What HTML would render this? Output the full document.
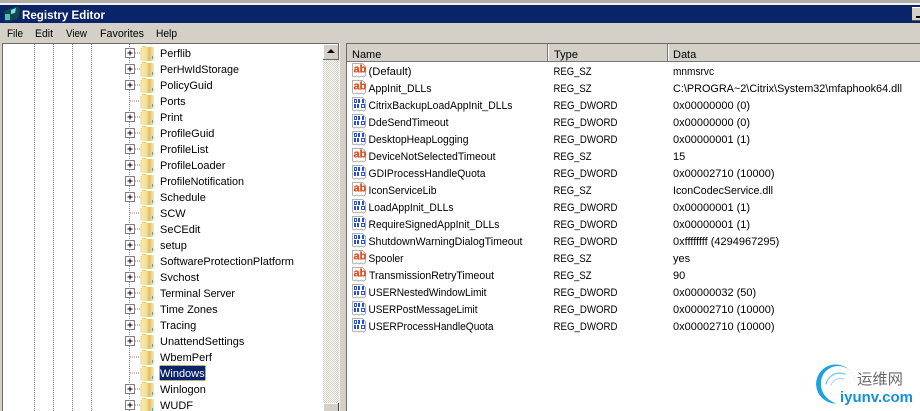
<!DOCTYPE html>
<html><head><meta charset="utf-8"><style>
html,body{margin:0;padding:0;background:#d4d0c8}
svg{display:block}
text{font-family:"Liberation Sans",sans-serif;font-size:11px;fill:#000}
</style></head><body>
<svg width="920" height="411" viewBox="0 0 920 411" xmlns="http://www.w3.org/2000/svg">
<defs>
<linearGradient id="fg" x1="0" x2="1" y1="0" y2="0">
<stop offset="0" stop-color="#f9eeb2"/><stop offset=".45" stop-color="#f2dc90"/><stop offset=".62" stop-color="#dfbd66"/><stop offset=".8" stop-color="#ecd484"/><stop offset="1" stop-color="#f8eab0"/>
</linearGradient>
<g id="f">
<path d="M0 2l1-1h4l1 1h6l1 1v12l-1 1H1l-1-1z" fill="url(#fg)"/>
<path d="M0 3v12M1 1.500h4" stroke="#e0c677" fill="none" stroke-width=".8"/>
<path d="M11 11h1v3h-1z" fill="#4aa3df"/>
</g>
<g id="b">
<rect x=".5" y=".5" width="9" height="9" fill="#fff" stroke="#808080"/>
<path d="M2 4.500h5M4.500 2v5" stroke="#000" transform="translate(.5 .5)"/>
<path d="M10 5h5" stroke="#808080" stroke-dasharray="1 1"/>
</g>
<path id="p" d="M1.500 1.500H11.500l3 3V13.500l-2 1.500-2-1-2.500 1-2.500-1-2.500 1-1.500-1z" fill="#fff" stroke="#b0b0b0"/>
<g id="s">
<use href="#p"/>
<text x="2.500" y="10.500" style="font-size:11px;font-weight:bold;fill:#e04a1c;stroke:#e04a1c;stroke-width:.2">ab</text>
</g>
<g id="d">
<use href="#p"/>
<g fill="#2a4fd0">
<path d="M3 3h3v4H3zM4 4v2h1V4z" fill-rule="evenodd"/>
<rect x="7" y="3" width="2" height="4"/><rect x="11" y="3" width="2" height="4"/>
<rect x="3" y="8" width="2" height="4"/><rect x="6" y="8" width="2" height="4"/>
<path d="M10 8h4v4h-4zM11 9v2h2V9z" fill-rule="evenodd"/>
</g>
</g>
<pattern id="chk" width="2" height="2" patternUnits="userSpaceOnUse"><rect width="2" height="2" fill="#fff"/><rect width="1" height="1" fill="#d4d0c8"/><rect x="1" y="1" width="1" height="1" fill="#d4d0c8"/></pattern>
</defs>

<rect width="920" height="411" fill="#d4d0c8"/>
<rect width="920" height="3" fill="#b0aea8"/>
<rect y="3" width="920" height="2" fill="#f4f3ef"/>
<rect y="5" width="920" height="18" fill="#0a246a"/>
<rect x="912" y="7" width="8" height="14" fill="#d4d0c8"/>
<rect x="912" y="7" width="8" height="1" fill="#fff"/>
<rect x="916" y="16" width="4" height="2" fill="#000"/>
<rect y="20" x="912" width="8" height="1" fill="#555"/>

<g>
<path d="M4 11l8-3 6-2 2 4-2 9-13 3z" fill="#14484c"/>
<path d="M5 14h5v6H5z" fill="#4cc0c0"/>
<path d="M11 10l5-2-1 5-4 1z" fill="#79e6e6"/>
</g>
<text x="22" y="19" textLength="83" lengthAdjust="spacingAndGlyphs" style="font-size:11.500px;font-weight:bold;fill:#fff">Registry Editor</text>

<text x="7" y="37" textLength="16" lengthAdjust="spacingAndGlyphs">File</text>
<text x="35" y="37" textLength="18" lengthAdjust="spacingAndGlyphs">Edit</text>
<text x="66" y="37" textLength="21" lengthAdjust="spacingAndGlyphs">View</text>
<text x="100" y="37" textLength="44" lengthAdjust="spacingAndGlyphs">Favorites</text>
<text x="156" y="37" textLength="21" lengthAdjust="spacingAndGlyphs">Help</text>

<rect x="2" y="43" width="338" height="1" fill="#6e6c66"/>
<rect x="2" y="43" width="1" height="368" fill="#6e6c66"/>
<rect x="3" y="44" width="321" height="367" fill="#fff"/>

<rect x="323" y="44" width="16" height="367" fill="url(#chk)"/>
<rect x="323" y="44" width="16" height="16" fill="#d4d0c8"/>
<path d="M323.500 59.500V44.500H338" fill="none" stroke="#fff"/>
<path d="M323 59.500h15.500V44" fill="none" stroke="#666"/>
<path d="M331 49l4 4h-8z" fill="#000"/>
<rect x="323" y="403" width="16" height="8" fill="#d4d0c8"/>
<path d="M323.500 411V403.500H338" fill="none" stroke="#fff"/>
<rect x="338" y="403" width="1" height="8" fill="#444"/>
<rect x="339" y="43" width="1" height="368" fill="#f2f1ed"/>

<g stroke="#808080" stroke-dasharray="1 1" fill="none">
<path d="M34.500 44V411M53.500 44V411M72.500 44V411M91.500 44V411"/>
<path d="M129.500 44V411"/>
<path d="M130 101h10M130 213h10M130 357h10M130 373h10"/>
</g>

<use href="#b" x="125" y="48"/><use href="#f" x="141" y="45"/>
<use href="#b" x="125" y="64"/><use href="#f" x="141" y="61"/>
<use href="#b" x="125" y="80"/><use href="#f" x="141" y="77"/>
<use href="#f" x="141" y="93"/>
<use href="#b" x="125" y="112"/><use href="#f" x="141" y="109"/>
<use href="#b" x="125" y="128"/><use href="#f" x="141" y="125"/>
<use href="#b" x="125" y="144"/><use href="#f" x="141" y="141"/>
<use href="#b" x="125" y="160"/><use href="#f" x="141" y="157"/>
<use href="#b" x="125" y="176"/><use href="#f" x="141" y="173"/>
<use href="#b" x="125" y="192"/><use href="#f" x="141" y="189"/>
<use href="#f" x="141" y="205"/>
<use href="#b" x="125" y="224"/><use href="#f" x="141" y="221"/>
<use href="#b" x="125" y="240"/><use href="#f" x="141" y="237"/>
<use href="#b" x="125" y="256"/><use href="#f" x="141" y="253"/>
<use href="#b" x="125" y="272"/><use href="#f" x="141" y="269"/>
<use href="#b" x="125" y="288"/><use href="#f" x="141" y="285"/>
<use href="#b" x="125" y="304"/><use href="#f" x="141" y="301"/>
<use href="#b" x="125" y="320"/><use href="#f" x="141" y="317"/>
<use href="#b" x="125" y="336"/><use href="#f" x="141" y="333"/>
<use href="#f" x="141" y="349"/>
<use href="#f" x="141" y="365"/>
<use href="#b" x="125" y="384"/><use href="#f" x="141" y="381"/>
<use href="#b" x="125" y="400"/><use href="#f" x="141" y="397"/>

<rect x="159.500" y="365.500" width="46" height="15" fill="#0a246a" stroke="#e8c840" stroke-dasharray="1 1"/>

<g>
<text x="160" y="57" textLength="31" lengthAdjust="spacingAndGlyphs">Perflib</text>
<text x="160" y="73" textLength="79" lengthAdjust="spacingAndGlyphs">PerHwIdStorage</text>
<text x="160" y="89">PolicyGuid</text>
<text x="160" y="105">Ports</text>
<text x="160" y="121">Print</text>
<text x="160" y="137">ProfileGuid</text>
<text x="160" y="153">ProfileList</text>
<text x="160" y="169">ProfileLoader</text>
<text x="160" y="185" textLength="84" lengthAdjust="spacingAndGlyphs">ProfileNotification</text>
<text x="160" y="201">Schedule</text>
<text x="160" y="217">SCW</text>
<text x="160" y="233">SeCEdit</text>
<text x="160" y="249">setup</text>
<text x="160" y="265">SoftwareProtectionPlatform</text>
<text x="160" y="281">Svchost</text>
<text x="160" y="297" textLength="75" lengthAdjust="spacingAndGlyphs">Terminal Server</text>
<text x="160" y="313">Time Zones</text>
<text x="160" y="329">Tracing</text>
<text x="160" y="345">UnattendSettings</text>
<text x="160" y="361">WbemPerf</text>
<text x="160" y="377" style="fill:#fff">Windows</text>
<text x="160" y="393">Winlogon</text>
<text x="160" y="409">WUDF</text>
</g>

<rect x="346" y="43" width="574" height="368" fill="#fff"/>
<rect x="346" y="43" width="574" height="1" fill="#6e6c66"/>
<rect x="346" y="43" width="1" height="368" fill="#6e6c66"/>
<rect x="347" y="44" width="573" height="17" fill="#d4d0c8"/>
<rect x="347" y="61" width="573" height="1" fill="#777"/>
<rect x="547" y="44" width="1" height="17" fill="#777"/>
<rect x="548" y="44" width="1" height="17" fill="#fff"/>
<rect x="667" y="44" width="1" height="17" fill="#777"/>
<rect x="668" y="44" width="1" height="17" fill="#fff"/>
<text x="352" y="58">Name</text>
<text x="554" y="58" textLength="24" lengthAdjust="spacingAndGlyphs">Type</text>
<text x="673" y="58">Data</text>

<use href="#s" x="351" y="62"/><text x="368.500" y="75" textLength="43" lengthAdjust="spacingAndGlyphs">(Default)</text><text x="553.500" y="75" textLength="38" lengthAdjust="spacingAndGlyphs">REG_SZ</text><text x="673" y="75" textLength="41" lengthAdjust="spacingAndGlyphs">mnmsrvc</text>
<use href="#s" x="351" y="79"/><text x="368.500" y="92" textLength="63" lengthAdjust="spacingAndGlyphs">AppInit_DLLs</text><text x="553.500" y="92" textLength="38" lengthAdjust="spacingAndGlyphs">REG_SZ</text><text x="673" y="92" textLength="229" lengthAdjust="spacingAndGlyphs">C:\PROGRA~2\Citrix\System32\mfaphook64.dll</text>
<use href="#d" x="351" y="96"/><text x="368.500" y="109" textLength="144" lengthAdjust="spacingAndGlyphs">CitrixBackupLoadAppInit_DLLs</text><text x="553.500" y="109" textLength="64" lengthAdjust="spacingAndGlyphs">REG_DWORD</text><text x="673" y="109">0x00000000 (0)</text>
<use href="#d" x="351" y="113"/><text x="368.500" y="126" textLength="80" lengthAdjust="spacingAndGlyphs">DdeSendTimeout</text><text x="553.500" y="126" textLength="64" lengthAdjust="spacingAndGlyphs">REG_DWORD</text><text x="673" y="126">0x00000000 (0)</text>
<use href="#d" x="351" y="130"/><text x="368.500" y="143" textLength="100" lengthAdjust="spacingAndGlyphs">DesktopHeapLogging</text><text x="553.500" y="143" textLength="64" lengthAdjust="spacingAndGlyphs">REG_DWORD</text><text x="673" y="143">0x00000001 (1)</text>
<use href="#s" x="351" y="147"/><text x="368.500" y="160" textLength="127" lengthAdjust="spacingAndGlyphs">DeviceNotSelectedTimeout</text><text x="553.500" y="160" textLength="38" lengthAdjust="spacingAndGlyphs">REG_SZ</text><text x="673" y="160">15</text>
<use href="#d" x="351" y="164"/><text x="368.500" y="177" textLength="117" lengthAdjust="spacingAndGlyphs">GDIProcessHandleQuota</text><text x="553.500" y="177" textLength="64" lengthAdjust="spacingAndGlyphs">REG_DWORD</text><text x="673" y="177">0x00002710 (10000)</text>
<use href="#s" x="351" y="181"/><text x="368.500" y="194" textLength="68" lengthAdjust="spacingAndGlyphs">IconServiceLib</text><text x="553.500" y="194" textLength="38" lengthAdjust="spacingAndGlyphs">REG_SZ</text><text x="673" y="194" textLength="100" lengthAdjust="spacingAndGlyphs">IconCodecService.dll</text>
<use href="#d" x="351" y="198"/><text x="368.500" y="211" textLength="85" lengthAdjust="spacingAndGlyphs">LoadAppInit_DLLs</text><text x="553.500" y="211" textLength="64" lengthAdjust="spacingAndGlyphs">REG_DWORD</text><text x="673" y="211">0x00000001 (1)</text>
<use href="#d" x="351" y="215"/><text x="368.500" y="228" textLength="131" lengthAdjust="spacingAndGlyphs">RequireSignedAppInit_DLLs</text><text x="553.500" y="228" textLength="64" lengthAdjust="spacingAndGlyphs">REG_DWORD</text><text x="673" y="228">0x00000001 (1)</text>
<use href="#d" x="351" y="232"/><text x="368.500" y="245" textLength="154" lengthAdjust="spacingAndGlyphs">ShutdownWarningDialogTimeout</text><text x="553.500" y="245" textLength="64" lengthAdjust="spacingAndGlyphs">REG_DWORD</text><text x="673" y="245">0xffffffff (4294967295)</text>
<use href="#s" x="351" y="249"/><text x="368.500" y="262" textLength="35" lengthAdjust="spacingAndGlyphs">Spooler</text><text x="553.500" y="262" textLength="38" lengthAdjust="spacingAndGlyphs">REG_SZ</text><text x="673" y="262">yes</text>
<use href="#s" x="351" y="266"/><text x="369" y="279" textLength="125" lengthAdjust="spacingAndGlyphs">TransmissionRetryTimeout</text><text x="553.500" y="279" textLength="38" lengthAdjust="spacingAndGlyphs">REG_SZ</text><text x="673" y="279">90</text>
<use href="#d" x="351" y="283"/><text x="368.500" y="296" textLength="118" lengthAdjust="spacingAndGlyphs">USERNestedWindowLimit</text><text x="553.500" y="296" textLength="64" lengthAdjust="spacingAndGlyphs">REG_DWORD</text><text x="673" y="296">0x00000032 (50)</text>
<use href="#d" x="351" y="300"/><text x="368.500" y="313" textLength="109" lengthAdjust="spacingAndGlyphs">USERPostMessageLimit</text><text x="553.500" y="313" textLength="64" lengthAdjust="spacingAndGlyphs">REG_DWORD</text><text x="673" y="313">0x00002710 (10000)</text>
<use href="#d" x="351" y="317"/><text x="368.500" y="330" textLength="125" lengthAdjust="spacingAndGlyphs">USERProcessHandleQuota</text><text x="553.500" y="330" textLength="64" lengthAdjust="spacingAndGlyphs">REG_DWORD</text><text x="673" y="330">0x00002710 (10000)</text>

<path d="M836 403.500A19.500 19.500 0 1 1 855 382A17 17 0 0 0 821 384C821 393 827 400 836 403.500z" fill="#1ea1e0"/>
<g fill="none" stroke-linecap="round">
<path d="M826 384c2-8 10-13 19-10" stroke="#7cc8ee" stroke-width="1.400"/>
<path d="M831 385c2-5 7-8 13-6" stroke="#a8dcf4" stroke-width="1.200"/>
</g>
<text x="857" y="384" textLength="46" lengthAdjust="spacingAndGlyphs" style="font-family:'Liberation Sans','Noto Sans CJK SC',sans-serif;font-size:15px;fill:#6a6a6a">运维网</text>
<text x="840" y="402" textLength="73" lengthAdjust="spacingAndGlyphs" style="font-size:15px;font-weight:bold;fill:#1590d8">iyunv.com</text>
</svg>
</body></html>
